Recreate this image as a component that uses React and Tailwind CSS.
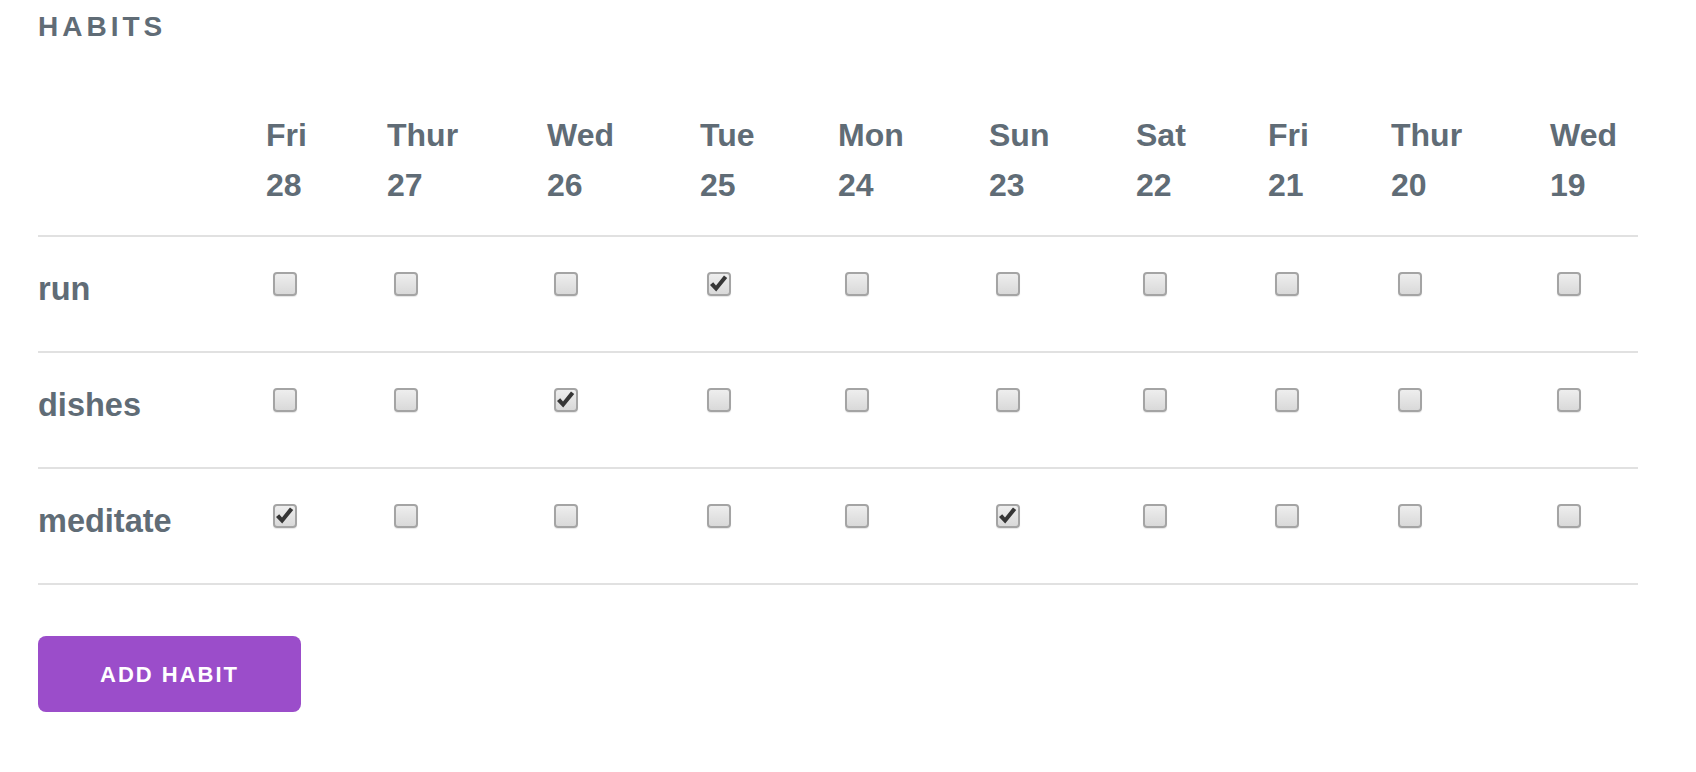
import { useState } from "react";

const days = [
  { day: "Fri", date: 28 },
  { day: "Thur", date: 27 },
  { day: "Wed", date: 26 },
  { day: "Tue", date: 25 },
  { day: "Mon", date: 24 },
  { day: "Sun", date: 23 },
  { day: "Sat", date: 22 },
  { day: "Fri", date: 21 },
  { day: "Thur", date: 20 },
  { day: "Wed", date: 19 },
];

const initialHabits = [
  { name: "run", done: [3] },
  { name: "dishes", done: [2] },
  { name: "meditate", done: [0, 5] },
];

// column widths measured off the table (label column + 10 days)
const gridCols =
  "grid grid-cols-[228px_121px_160px_153px_138px_151px_147px_132px_123px_159px_88px]";

function Checkbox({ checked, onChange }) {
  return (
    <button
      type="button"
      onClick={onChange}
      className="ml-[7px] relative block w-[24px] h-[24px] rounded-[4px] border-2 border-[#a4a4a4] bg-linear-to-b from-[#eeeeee] to-[#d9d9d9] shadow-[0_1px_1px_rgba(0,0,0,0.1)]"
      aria-checked={checked}
      role="checkbox"
    >
      {checked && (
        <svg viewBox="0 0 24 24" className="absolute -left-[2px] -top-[2px] w-[24px] h-[24px]">
          <path d="M3 13 L6.2 10.2 L9 13.4 L17 3.4 L20.2 6 L9.2 19.6 Z" fill="#363636" />
        </svg>
      )}
    </button>
  );
}

export default function App() {
  const [habits, setHabits] = useState(initialHabits);

  const toggle = (h, d) => {
    setHabits(
      habits.map((habit, i) => {
        if (i !== h) return habit;
        const done = habit.done.includes(d)
          ? habit.done.filter((x) => x !== d)
          : [...habit.done, d];
        return { ...habit, done };
      })
    );
  };

  return (
    <div className="min-h-screen bg-white pl-[38px] font-['Liberation_Sans',Arial,sans-serif] text-[#606c76]">
      <h1 className="pt-[13px] text-[28px] leading-[28px] font-bold tracking-[4px]">HABITS</h1>

      <div className="w-[1600px] mt-[69px]">
        {/* Header */}
        <div className={`${gridCols} border-b-2 border-[#e1e1e1] pb-[25px] text-[32px] font-bold leading-[50px]`}>
          <div />
          {days.map((d, i) => (
            <div key={i}>
              <div>{d.day}</div>
              <div>{d.date}</div>
            </div>
          ))}
        </div>

        {/* Rows */}
        {habits.map((habit, h) => (
          <div key={habit.name} className={`${gridCols} h-[116px] border-b-2 border-[#e1e1e1] items-start`}>
            <div className="pt-[36px] text-[32.5px] font-bold leading-none">{habit.name}</div>
            {days.map((d, i) => (
              <div key={i} className="pt-[35px]">
                <Checkbox checked={habit.done.includes(i)} onChange={() => toggle(h, i)} />
              </div>
            ))}
          </div>
        ))}
      </div>

      <button className="mt-[51px] w-[263px] h-[76px] rounded-[8px] bg-[#9b4dca] text-white text-[22px] font-bold tracking-[2px] flex items-center justify-center">
        ADD HABIT
      </button>
    </div>
  );
}
